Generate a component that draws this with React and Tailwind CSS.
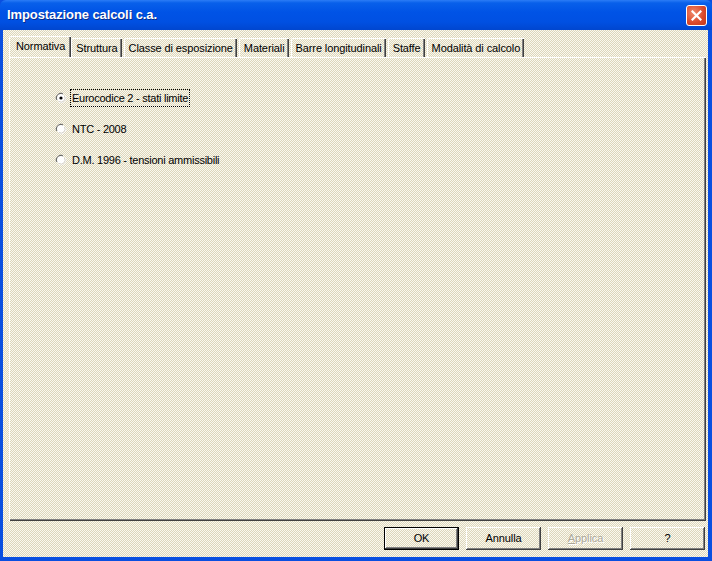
import React, { useState } from 'react';

const dither =
  'bg-[#ece9d8] bg-[repeating-conic-gradient(#fbf9ef_0_25%,#dcd6bb_0_50%)] bg-[length:2px_2px]';

const tabs = [
  'Normativa',
  'Struttura',
  'Classe di esposizione',
  'Materiali',
  'Barre longitudinali',
  'Staffe',
  'Modalità di calcolo',
];

const options = [
  'Eurocodice 2 - stati limite',
  'NTC - 2008',
  'D.M. 1996 - tensioni ammissibili',
];

const Radio = ({ checked }) => (
  <svg width="12" height="12" viewBox="0 0 12 12" className="shrink-0">
    <path d="M1.5 8 A5 5 0 0 1 8 1.5" fill="none" stroke="#808080" strokeWidth="1" />
    <path d="M2.5 8 A4 4 0 0 1 8 2.5" fill="none" stroke="#404040" strokeWidth="1" />
    <circle cx="6" cy="6" r="4" fill="#fff" />
    <path d="M10.5 4 A5 5 0 0 1 4 10.5" fill="none" stroke="#fff" strokeWidth="1" />
    <path d="M9.5 4 A4 4 0 0 1 4 9.5" fill="none" stroke="#d4d0c8" strokeWidth="1" />
    {checked && <circle cx="6" cy="6" r="1.6" fill="#000" />}
  </svg>
);

const Button = ({ children, isDefault, disabled }) => (
  <button
    type="button"
    className={`w-[75px] h-[23px] text-[11px] tracking-[-0.1px] ${dither} ${
      isDefault
        ? 'border border-black shadow-[inset_-1px_-1px_#404040,inset_1px_1px_#fff,inset_-2px_-2px_#808080]'
        : 'shadow-[inset_-1px_-1px_#404040,inset_1px_1px_#fff,inset_-2px_-2px_#808080]'
    } ${disabled ? 'text-[#aca899] [text-shadow:1px_1px_#fff]' : 'text-black'}`}
  >
    {children}
  </button>
);

const App = () => {
  const [active, setActive] = useState(0);
  const [selected, setSelected] = useState(0);

  return (
    <div className="w-[712px] h-[561px] flex flex-col bg-[#0a4fe0] font-['Liberation_Sans',Arial,sans-serif] select-none">
      {/* barra del titolo */}
      <div className="h-[30px] shrink-0 flex items-center justify-between pl-[7px] pr-[5px] bg-[linear-gradient(#2b7cf6_0px,#0860ea_3px,#0053e6_12px,#0050e2_22px,#0046cf_30px)] rounded-t-[6px]">
        <span className="text-white font-bold text-[13px] tracking-[-0.1px] [text-shadow:1px_1px_#0a2c8a]">
          Impostazione calcoli c.a.
        </span>
        <div className="w-[21px] h-[21px] rounded-[3px] border border-white bg-[radial-gradient(circle_at_35%_35%,#f08a6c,#d9482a_60%,#c23a1c)] flex items-center justify-center">
          <svg width="11" height="11" viewBox="0 0 11 11">
            <path d="M1.5 1.5 L9.5 9.5 M9.5 1.5 L1.5 9.5" stroke="#fff" strokeWidth="2.2" strokeLinecap="square" />
          </svg>
        </div>
      </div>

      {/* corpo */}
      <div className={`flex-1 flex flex-col ml-[3px] mr-[4px] mb-[4px] ${dither}`}>
        <div className="flex items-end pl-[8px] pt-[6px] h-[27px]">
          {tabs.map((t, i) => {
            const on = i === active;
            return (
              <div
                key={t}
                onClick={() => setActive(i)}
                className={`relative flex items-center text-[11px] tracking-[-0.1px] text-black border-l border-t border-white rounded-tl-[2px] shadow-[inset_-1px_0_#404040,inset_-2px_0_#808080] ${
                  on
                    ? 'h-[21px] px-[6px] -mr-[2px] z-10 pb-[1px]'
                    : 'h-[19px] px-[4px] ml-[2px] pt-[1px]'
                } ${i === 0 && on ? '-ml-[2px]' : ''}`}
              >
                {t}
              </div>
            );
          })}
        </div>

        <div className="ml-[6px] mr-[2px] h-[464px] border-l border-t border-white shadow-[inset_-1px_-1px_#404040,inset_-2px_-2px_#808080] flex flex-col gap-[15px] pt-[32px] pl-[45px]">
          {options.map((o, i) => (
            <label key={o} onClick={() => setSelected(i)} className="flex items-center gap-[4px] h-[16px] text-[11px] tracking-[-0.25px] text-black">
              <Radio checked={i === selected} />
              <span className={`px-[1px] ${i === 0 ? 'outline outline-1 outline-dotted outline-black' : ''}`}>
                {o}
              </span>
            </label>
          ))}
        </div>

        <div className="flex justify-end gap-[7px] pr-[3px] pt-[6px]">
          <Button isDefault>OK</Button>
          <Button>Annulla</Button>
          <Button disabled>
            <span className="underline">A</span>pplica
          </Button>
          <Button>?</Button>
        </div>
      </div>
    </div>
  );
};

export default App;
